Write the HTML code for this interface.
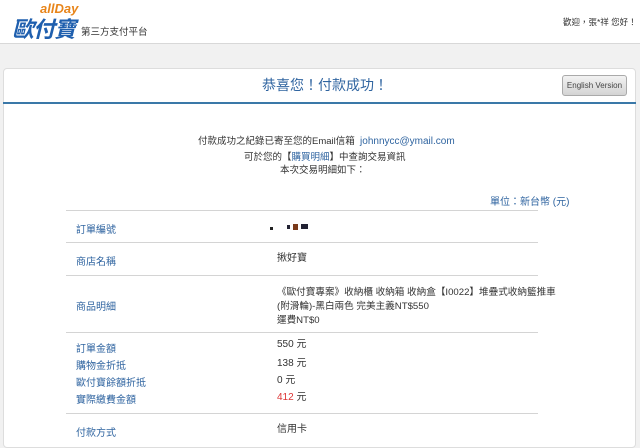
<!DOCTYPE html>
<html><head><meta charset="utf-8"><style>
*{margin:0;padding:0;box-sizing:border-box}
body{width:640px;height:441px;overflow:hidden;background:#f1f1f1;font-family:"Liberation Sans","Noto Sans CJK TC",sans-serif;font-size:9.5px;color:#333;position:relative}
.hdr{position:absolute;left:0;top:0;width:640px;height:44px;background:#fff;border-bottom:1px solid #d8d8d8}
.abs{position:absolute;white-space:nowrap}
.panel{position:absolute;left:3px;top:68px;width:633px;height:380px;background:#fff;border:1px solid #ddd;border-radius:4px}
.blue{color:#2f64a0}
.line{position:absolute;left:66px;width:472px;height:1px;background:#d4d4d4}
.lab{position:absolute;left:76px;color:#2f64a0;font-size:10px}
.val{position:absolute;left:277px;font-size:10px;color:#333;line-height:14px;white-space:nowrap}
</style></head><body>
<div class="hdr">
<div class="abs" style="left:40px;top:1px;font:italic bold 13px 'Liberation Sans',sans-serif;color:#e8851a">allDay</div>
<div class="abs" style="left:12px;top:12px;font:italic bold 22px 'Liberation Sans','Noto Sans CJK TC',sans-serif;color:#1f5fae;letter-spacing:-1px">歐付寶</div>
<div class="abs" style="left:81px;top:24px;font-size:9.5px;color:#333">第三方支付平台</div>
<div class="abs" style="left:563px;top:16px;font-size:8.5px;color:#333">歡迎，張*祥 您好！</div>
</div>
<div class="panel"></div>
<div class="abs blue" style="left:262px;top:75px;font-size:14px">恭喜您！付款成功！</div>
<div class="abs" style="left:562px;top:75px;width:65px;height:21px;border:1px solid #aaa;border-radius:3px;background:linear-gradient(#f2f2f2,#d4d4d4);font-size:8px;color:#444;text-align:center;line-height:19px">English Version</div>
<div class="abs" style="left:3px;top:102px;width:633px;height:2px;background:#3a78a8"></div>
<div class="abs" style="left:198px;top:133px">付款成功之紀錄已寄至您的Email信箱 &nbsp;<span class="blue" style="font-size:10px">johnnycc@ymail.com</span></div>
<div class="abs" style="left:244px;top:149px">可於您的【<span class="blue">購買明細</span>】中查詢交易資訊</div>
<div class="abs" style="left:280px;top:162px">本次交易明細如下：</div>
<div class="abs blue" style="left:490px;top:193px;font-size:10px">單位：新台幣 (元)</div>
<div class="line" style="top:210px"></div>
<div class="line" style="top:242px"></div>
<div class="line" style="top:275px"></div>
<div class="line" style="top:332px"></div>
<div class="line" style="top:413px"></div>
<div class="lab" style="top:221px">訂單編號</div>
<div class="abs" style="left:270px;top:224px;width:50px;height:6px">
<span style="position:absolute;left:0;top:3px;width:3px;height:3px;background:#222"></span>
<span style="position:absolute;left:17px;top:1px;width:3px;height:4px;background:#223"></span>
<span style="position:absolute;left:23px;top:0;width:5px;height:6px;background:#7a3a1a"></span>
<span style="position:absolute;left:31px;top:0;width:7px;height:5px;background:#223"></span></div>
<div class="lab" style="top:253px">商店名稱</div><div class="val" style="top:252px">揪好寶</div>
<div class="lab" style="top:298px">商品明細</div>
<div class="val" style="top:286px;font-size:9.6px">《歐付寶專案》收納櫃 收納箱 收納盒【I0022】堆疊式收納籃推車<br>(附滑輪)-黑白兩色 完美主義NT$550<br>運費NT$0</div>
<div class="lab" style="top:340px">訂單金額</div><div class="val" style="top:338px">550 元</div>
<div class="lab" style="top:357px">購物金折抵</div><div class="val" style="top:357px">138 元</div>
<div class="lab" style="top:374px">歐付寶餘額折抵</div><div class="val" style="top:374px">0 元</div>
<div class="lab" style="top:391px">實際繳費金額</div><div class="val" style="top:391px"><span style="color:#d33">412</span> 元</div>
<div class="lab" style="top:424px">付款方式</div><div class="val" style="top:423px">信用卡</div>
</body></html>
